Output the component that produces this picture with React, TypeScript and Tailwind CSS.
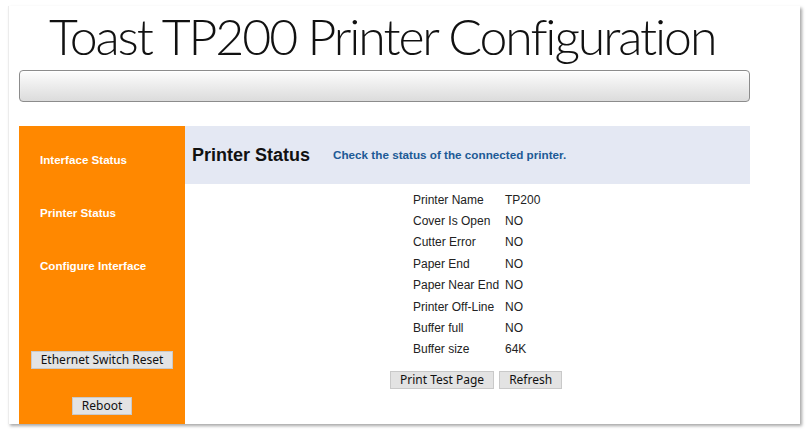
import React from "react";

const rows: [string, string][] = [
  ["Printer Name", "TP200"],
  ["Cover Is Open", "NO"],
  ["Cutter Error", "NO"],
  ["Paper End", "NO"],
  ["Paper Near End", "NO"],
  ["Printer Off-Line", "NO"],
  ["Buffer full", "NO"],
  ["Buffer size", "64K"],
];

const navItems = ["Interface Status", "Printer Status", "Configure Interface"];

function GrayButton({ label, className = "" }: { label: string; className?: string }) {
  return (
    <button
      type="button"
      className={`h-[18px] border border-[#c9c9c9] bg-[#e3e3e3] px-[9px] text-[12px] leading-[16px] text-[#111] [font-family:'Noto_Sans',sans-serif] ${className}`}
    >
      {label}
    </button>
  );
}

export default function App() {
  return (
    <div className="h-[433px] w-[810px] overflow-hidden bg-white pl-[8px] pt-[6px]">
      <div className="flex h-[418px] w-[792px] flex-col border-l border-[#ececec] bg-white pl-[10px] shadow-[2px_2px_3px_rgba(0,0,0,0.35)]">
        <h1 className="pl-[30px] pt-[4px] text-[50px] font-light leading-[52px] tracking-[-2.1px] text-[#111] [font-family:Lato,sans-serif]">
          Toast TP200 Printer Configuration
        </h1>
        <div className="mt-[8px] h-[32px] w-[731px] rounded-[4px] border border-[#8c8c8c] bg-gradient-to-b from-[#fdfdfd] via-[#ececec] to-[#dcdcdc] shadow-[inset_0_1px_1px_#fff]" />
        <div className="mt-[24px] flex flex-1 [font-family:'Liberation_Sans',Arial,sans-serif]">
          <aside className="flex w-[166px] flex-col bg-[#ff8800]">
            <nav className="flex flex-col gap-[38px] pl-[21px] pt-[26px]">
              {navItems.map((n) => (
                <a key={n} className="text-[11.6px] font-bold leading-[15px] text-white">
                  {n}
                </a>
              ))}
            </nav>
            <div className="mt-auto flex flex-col items-center pb-[9px]">
              <GrayButton label="Ethernet Switch Reset" />
              <GrayButton label="Reboot" className="mt-[28px]" />
            </div>
          </aside>
          <main className="flex w-[565px] flex-col">
            <div className="flex h-[58px] items-center gap-[23px] bg-[#e4e8f3] pl-[7px]">
              <h2 className="text-[18px] font-bold text-[#111]">Printer Status</h2>
              <span className="text-[11.7px] font-bold text-[#1d5a96]">
                Check the status of the connected printer.
              </span>
            </div>
            <div className="flex flex-col pl-[228px] pt-[5px]">
              <table className="border-collapse text-[12px] text-[#222]">
                <tbody>
                  {rows.map(([k, v]) => (
                    <tr key={k} className="h-[21.4px]">
                      <td className="w-[92px] whitespace-nowrap">{k}</td>
                      <td>{v}</td>
                    </tr>
                  ))}
                </tbody>
              </table>
              <div className="-ml-[23px] mt-[11px] flex gap-[5px]">
                <GrayButton label="Print Test Page" />
                <GrayButton label="Refresh" />
              </div>
            </div>
          </main>
        </div>
      </div>
    </div>
  );
}
